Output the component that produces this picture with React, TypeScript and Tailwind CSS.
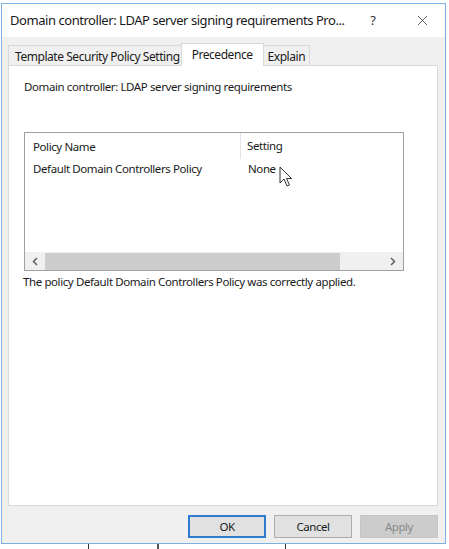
import { X } from 'lucide-react'

const font = { fontFamily: '"Noto Sans", "Open Sans", sans-serif' }

function Tab({ label, active, pad }: { label: string; active?: boolean; pad: string }) {
  if (active) {
    return (
      <div className={`relative z-10 -mb-px h-[23px] border border-b-0 border-[#d9d9d9] bg-white pt-[2px] text-[12px] tracking-[-0.45px] text-[#1a1a1a] ${pad}`}>
        {label}
      </div>
    )
  }
  return (
    <div className={`h-[20px] border border-b-0 border-[#d9d9d9] bg-[#f0f0f0] pt-[2px] text-[12px] tracking-[-0.45px] text-[#1a1a1a] first:border-r-0 last:border-l-0 ${pad}`}>
      {label}
    </div>
  )
}

function Btn({ label, kind }: { label: string; kind?: 'default' | 'disabled' }) {
  const cls =
    kind === 'default'
      ? 'border-2 border-[#2f7bd0] bg-[#e1e1e1] text-[#1a1a1a]'
      : kind === 'disabled'
        ? 'border border-[#c6c6c6] bg-[#cccccc] text-[#8a8a8a]'
        : 'border border-[#adadad] bg-[#e1e1e1] text-[#1a1a1a]'
  return (
    <div className={`flex h-[23px] w-[78px] items-center justify-center text-[11.5px] tracking-[-0.45px] ${cls}`}>
      {label}
    </div>
  )
}

function Cursor() {
  return (
    <svg className="absolute left-[279px] top-[166px]" width="14" height="22" viewBox="0 0 14 22">
      <path
        d="M1 1 L1 17 L5 13 L8 20 L10.5 19 L7.5 12.5 L12.5 12.5 Z"
        fill="white"
        stroke="#333"
        strokeWidth="1"
        strokeLinejoin="round"
      />
    </svg>
  )
}

export default function App() {
  return (
    <div className="relative flex h-[549px] w-[449px] flex-col bg-white" style={font}>
      <div className="ml-[1px] mt-[3px] flex h-[541px] w-[445px] flex-col border border-[#7eb0e4] bg-[#f0f0f0]">
        {/* title bar */}
        <div className="flex h-[33px] items-center bg-white pl-[8px] pr-[14px]">
          <div className="flex-1 whitespace-nowrap text-[13px] tracking-[-0.45px] text-[#1a1a1a]">
            Domain controller: LDAP server signing requirements Pro...
          </div>
          <div className="mr-[38px] text-[13px] text-[#333]">?</div>
          <X size={17} strokeWidth={1.1} color="#333" />
        </div>

        {/* tabs */}
        <div className="flex items-end pl-[6px] pt-[6px]">
          <Tab label="Template Security Policy Setting" pad="pl-[6px] pr-[1px]" />
          <Tab label="Precedence" active pad="px-[10px]" />
          <Tab label="Explain" pad="px-[4px]" />
        </div>

        {/* panel */}
        <div className="ml-[6px] mr-[7px] flex h-[441px] flex-col border border-[#d9d9d9] bg-white pl-[15px] text-[11.5px] tracking-[-0.4px] text-[#1a1a1a]">
          <div className="mt-[12px] leading-[18px]">Domain controller: LDAP server signing requirements</div>

          <div className="mt-[36px] flex h-[139px] w-[380px] flex-col border border-[#a0a0a0]">
            <div className="flex h-[26px] items-center">
              <div className="h-full w-[216px] border-r border-[#e5e5e5] pl-[8px] pt-[5px]">Policy Name</div>
              <div className="pl-[6px]">Setting</div>
            </div>
            <div className="flex h-[20px] items-center">
              <div className="w-[216px] pl-[8px]">Default Domain Controllers Policy</div>
              <div className="pl-[7px]">None</div>
            </div>
            <div className="flex-1" />
            <div className="flex h-[18px] items-center bg-[#f0f0f0]">
              <div className="flex w-[20px] items-center justify-center">
                <svg width="6" height="9" viewBox="0 0 6 9">
                  <path d="M5 1 L1.5 4.5 L5 8" fill="none" stroke="#606060" strokeWidth="1.5" />
                </svg>
              </div>
              <div className="h-[17px] w-[295px] bg-[#cdcdcd]" />
              <div className="flex flex-1 items-center justify-end pr-[7px]">
                <svg width="6" height="9" viewBox="0 0 6 9">
                  <path d="M1 1 L4.5 4.5 L1 8" fill="none" stroke="#606060" strokeWidth="1.5" />
                </svg>
              </div>
            </div>
          </div>

          <div className="mt-[2px] -ml-[1px] leading-[18px]">
            The policy Default Domain Controllers Policy was correctly applied.
          </div>
        </div>

        {/* buttons */}
        <div className="mr-[7px] mt-[9px] flex justify-end gap-[8px]">
          <Btn label="OK" kind="default" />
          <Btn label="Cancel" />
          <Btn label="Apply" kind="disabled" />
        </div>
      </div>

      {/* fragments of the window below */}
      <div className="flex h-[5px] items-start">
        <div className="ml-[88px] h-[5px] w-px bg-[#333]" />
        <div className="ml-[68px] h-[5px] w-[2px] bg-[#555]" />
        <div className="ml-[126px] h-[5px] w-px bg-[#333]" />
      </div>

      <Cursor />
    </div>
  )
}
